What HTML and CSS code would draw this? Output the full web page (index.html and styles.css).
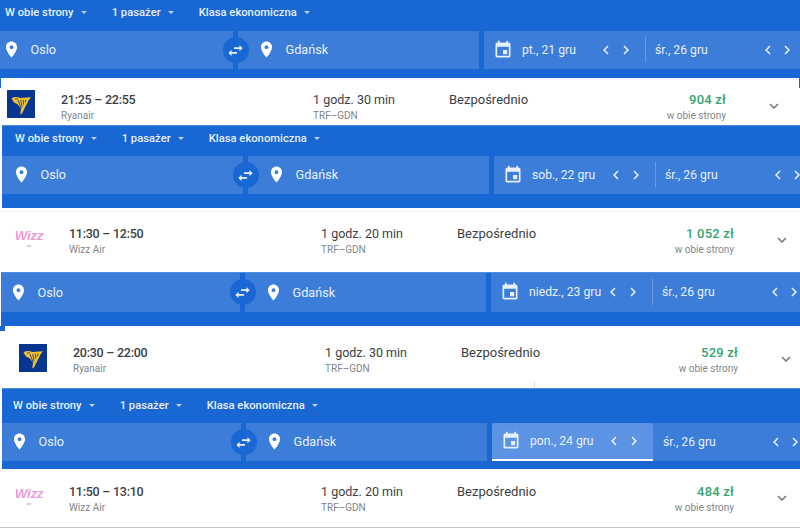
FILE: index.html
```html
<!DOCTYPE html>
<html lang="pl">
<head>
<meta charset="utf-8">
<title>Loty Oslo – Gdańsk</title>
<link rel="stylesheet" href="styles.css">
</head>
<body>
<svg class="defs" width="0" height="0" aria-hidden="true">
  <symbol id="pin" viewBox="0 0 24 24"><path d="M12 2C8.13 2 5 5.13 5 9c0 5.25 7 13 7 13s7-7.75 7-13c0-3.87-3.13-7-7-7zm0 9.5a2.5 2.5 0 0 1 0-5 2.5 2.5 0 0 1 0 5z"/></symbol>
  <symbol id="swap" viewBox="0 0 24 24"><path d="M6.99 11L3 15l3.99 4v-3H14v-2H6.99v-3zM21 9l-3.99-4v3H10v2h7.01v3L21 9z"/></symbol>
  <symbol id="cal" viewBox="0 0 24 24"><path d="M17 12h-5v5h5v-5zM16 1v2H8V1H6v2H5c-1.11 0-1.99.9-1.99 2L3 19c0 1.1.89 2 2 2h14c1.1 0 2-.9 2-2V5c0-1.1-.9-2-2-2h-1V1h-2zm3 18H5V8h14v11z"/></symbol>
  <symbol id="prev" viewBox="0 0 24 24"><path d="M15.41 7.41L14 6l-6 6 6 6 1.41-1.41L10.83 12z"/></symbol>
  <symbol id="next" viewBox="0 0 24 24"><path d="M8.59 16.59L10 18l6-6-6-6-1.41 1.41L13.17 12z"/></symbol>
  <symbol id="more" viewBox="0 0 24 24"><path d="M16.59 8.59L12 13.17 7.41 8.59 6 10l6 6 6-6z"/></symbol>
  <symbol id="harp" viewBox="0 0 28 28"><rect width="28" height="28" fill="#073590"/><path fill="#eec22e" d="M4.5 8.5C7.5 6.500 10.500 6.800 13 8l11-.8-2.500 3.300L15 23.500l-1.800 1 .8-5.500C12.500 15.500 10 13.500 7 12.500z"/><path stroke="#073590" stroke-width=".8" fill="none" d="M11 10.200l3.300 8.300M13.700 10l1.500 7M16.300 9.800l.3 4.800M19 9.600l-1 3M8 9.200c1-.6 2-.6 3 0"/></symbol>
</svg>

<section class="search s1">
  <div class="opts"><span class="opt">W obie strony<i class="caret"></i></span><span class="opt">1 pasażer<i class="caret"></i></span><span class="opt">Klasa ekonomiczna<i class="caret"></i></span></div>
  <div class="fields">
    <div class="field origin"><svg class="pin"><use href="#pin"/></svg>Oslo<span class="swap"><svg><use href="#swap"/></svg></span></div>
    <div class="field dest"><svg class="pin"><use href="#pin"/></svg>Gdańsk</div>
    <div class="dates">
      <div class="date depart"><svg class="cal"><use href="#cal"/></svg><span>pt., 21 gru</span><span class="nav"><svg><use href="#prev"/></svg><svg><use href="#next"/></svg></span></div>
      <div class="date back"><span>śr., 26 gru</span><span class="nav"><svg><use href="#prev"/></svg><svg><use href="#next"/></svg></span></div>
    </div>
  </div>
</section>
<article class="row r1">
  <svg class="logo"><use href="#harp"/></svg>
  <div class="col times"><div class="main">21:25 – 22:55</div><div class="sub">Ryanair</div></div>
  <div class="col dur"><div class="main thin span-dur">1 godz. 30 min</div><div class="sub">TRF–GDN</div></div>
  <div class="col stops"><div class="main thin">Bezpośrednio</div></div>
  <div class="col price"><div class="main green">904 zł</div><div class="sub">w obie strony</div></div>
  <svg class="more"><use href="#more"/></svg>
</article>

<section class="search s2">
  <div class="opts"><span class="opt">W obie strony<i class="caret"></i></span><span class="opt">1 pasażer<i class="caret"></i></span><span class="opt">Klasa ekonomiczna<i class="caret"></i></span></div>
  <div class="fields">
    <div class="field origin"><svg class="pin"><use href="#pin"/></svg>Oslo<span class="swap"><svg><use href="#swap"/></svg></span></div>
    <div class="field dest"><svg class="pin"><use href="#pin"/></svg>Gdańsk</div>
    <div class="dates">
      <div class="date depart"><svg class="cal"><use href="#cal"/></svg><span>sob., 22 gru</span><span class="nav"><svg><use href="#prev"/></svg><svg><use href="#next"/></svg></span></div>
      <div class="date back"><span>śr., 26 gru</span><span class="nav"><svg><use href="#prev"/></svg><svg><use href="#next"/></svg></span></div>
    </div>
  </div>
</section>
<article class="row r2">
  <div class="logo wizz"><b>Wizz</b><small>air</small></div>
  <div class="col times"><div class="main">11:30 – 12:50</div><div class="sub">Wizz Air</div></div>
  <div class="col dur"><div class="main thin span-dur">1 godz. 20 min</div><div class="sub">TRF–GDN</div></div>
  <div class="col stops"><div class="main thin">Bezpośrednio</div></div>
  <div class="col price"><div class="main green">1 052 zł</div><div class="sub">w obie strony</div></div>
  <svg class="more"><use href="#more"/></svg>
</article>

<section class="search s3">
  <div class="fields">
    <div class="field origin"><svg class="pin"><use href="#pin"/></svg>Oslo<span class="swap"><svg><use href="#swap"/></svg></span></div>
    <div class="field dest"><svg class="pin"><use href="#pin"/></svg>Gdańsk</div>
    <div class="dates">
      <div class="date depart"><svg class="cal"><use href="#cal"/></svg><span>niedz., 23 gru</span><span class="nav"><svg><use href="#prev"/></svg><svg><use href="#next"/></svg></span></div>
      <div class="date back"><span>śr., 26 gru</span><span class="nav"><svg><use href="#prev"/></svg><svg><use href="#next"/></svg></span></div>
    </div>
  </div>
</section>
<article class="row r3">
  <svg class="logo"><use href="#harp"/></svg>
  <div class="col times"><div class="main">20:30 – 22:00</div><div class="sub">Ryanair</div></div>
  <div class="col dur"><div class="main thin span-dur">1 godz. 30 min</div><div class="sub">TRF–GDN</div></div>
  <div class="col stops"><div class="main thin">Bezpośrednio</div></div>
  <div class="col price"><div class="main green">529 zł</div><div class="sub">w obie strony</div></div>
  <svg class="more"><use href="#more"/></svg>
</article>

<section class="search s4">
  <div class="opts"><span class="opt">W obie strony<i class="caret"></i></span><span class="opt">1 pasażer<i class="caret"></i></span><span class="opt">Klasa ekonomiczna<i class="caret"></i></span></div>
  <div class="fields">
    <div class="field origin"><svg class="pin"><use href="#pin"/></svg>Oslo<span class="swap"><svg><use href="#swap"/></svg></span></div>
    <div class="field dest"><svg class="pin"><use href="#pin"/></svg>Gdańsk</div>
    <div class="dates">
      <div class="date depart active"><svg class="cal"><use href="#cal"/></svg><span>pon., 24 gru</span><span class="nav"><svg><use href="#prev"/></svg><svg><use href="#next"/></svg></span></div>
      <div class="date back"><span>śr., 26 gru</span><span class="nav"><svg><use href="#prev"/></svg><svg><use href="#next"/></svg></span></div>
    </div>
  </div>
</section>
<article class="row r4">
  <div class="logo wizz"><b>Wizz</b><small>air</small></div>
  <div class="col times"><div class="main">11:50 – 13:10</div><div class="sub">Wizz Air</div></div>
  <div class="col dur"><div class="main thin span-dur">1 godz. 20 min</div><div class="sub">TRF–GDN</div></div>
  <div class="col stops"><div class="main thin">Bezpośrednio</div></div>
  <div class="col price"><div class="main green">484 zł</div><div class="sub">w obie strony</div></div>
  <svg class="more"><use href="#more"/></svg>
</article>
</body>
</html>
```

FILE: styles.css
```css
* { box-sizing: border-box; }
html, body { margin: 0; height: 528px; overflow: hidden; background: #fff; }
body { font-family: Roboto, "Liberation Sans", sans-serif; color: #3c4043; }
.defs { position: absolute; }

.search { background: #1967d2; overflow: hidden; color: #e8f0fe; margin-left: var(--ml); --ml: 0px; --shift: 0px; }
.s1 { height: 78px; }
.s2 { height: 83px; --ml: 2px; --shift: 10px; border-top: 1px solid #4f8ee2; }
.s3 { height: 54px; --ml: 1px; --shift: 7px; border-top: 1px solid #4f8ee2; }
.s4 { height: 81px; --ml: 2px; --shift: 8px; border-top: 1px solid #4f8ee2; }

.opts { display: flex; height: 31px; padding: 4px 0 0 calc(5px + var(--shift) - var(--ml)); }
.s2 .opts { height: 30px; }
.s4 .opts { height: 34px; padding-top: 8px; }
.opt { display: flex; align-items: center; height: 16px; margin-right: 25px; font-size: 11.2px; font-weight: 500; letter-spacing: .03px; white-space: nowrap; }
.caret { width: 0; height: 0; margin-left: 7px; border: 3px solid transparent; border-top-color: #b9d0f2; border-bottom-width: 0; }

.fields { display: flex; gap: 5px; height: 38px; width: 830px; font-size: 12.7px; }
.s3 .fields { height: 39px; }
.field, .dates { display: flex; align-items: center; background: #3c7dd9; flex: none; position: relative; }
.field { padding-bottom: 1px; }
.origin { width: calc(233px + var(--shift) - var(--ml)); padding-left: calc(2px + var(--shift) - var(--ml)); }
.dest { width: 241px; padding-left: 19px; }
.pin { width: 19px; height: 19px; margin-right: 9.5px; fill: #fff; flex: none; }
.swap { position: absolute; right: -15.5px; top: 6px; width: 26px; height: 26px; border-radius: 50%; background: #1967d2; display: flex; align-items: center; justify-content: center; z-index: 1; }
.swap svg { width: 19px; height: 19px; fill: #e8f0fe; }

.dates { width: 316px; font-size: 12.2px; }
.date { display: flex; align-items: center; height: 100%; white-space: nowrap; padding-bottom: 1px; }
.depart { width: 161px; padding: 0 10px 1px 9px; position: relative; }
.depart::after { content: ""; position: absolute; right: -1px; top: 6px; bottom: 7px; width: 1px; background: #6a9be3; }
.back { width: 155px; padding: 0 4px 1px 10px; }
.cal { width: 20px; height: 20px; margin-right: 9px; fill: #e8f0fe; flex: none; }
.nav { display: flex; gap: 2px; margin-left: auto; }
.nav svg { width: 18px; height: 18px; fill: #e8f0fe; flex: none; display: block; }
.back .nav { gap: 1px; }
.active { background: #5c93e3; border-radius: 4px 4px 0 0; border-bottom: 2px solid #fff; padding-bottom: 0; }
.active::after { display: none; }

.row { --r: 0px; --t: 1px; position: relative; display: flex; align-items: flex-start; background: #fff; padding-left: calc(7px + var(--r)); }
.r1 { height: 47px; padding-top: 12px; }
.r2 { height: 64px; padding-top: 16px; --r: 8px; }
.r3 { height: 62px; padding-top: 18px; --r: 12px; --t: 0px; }
.r4 { height: 59px; padding-top: 13px; --r: 8px; border-bottom: 1px solid #c6c6c6; }
.r1::before, .r1::after { content: ""; position: absolute; top: 0; height: 10px; width: 1px; background: #1967d2; }
.r1::before { left: 0; }
.r1::after { right: 0; }
.r2::before { content: ""; position: absolute; left: 0; right: 0; top: 3px; height: 1px; background: #edf0f2; }
.r3::before { content: ""; position: absolute; left: 0; top: 0; width: 5px; height: 5px; background: #1967d2; }
.r3::after { content: ""; position: absolute; left: 534px; bottom: 0; width: 1px; height: 7px; background: #dadce0; }

.logo { width: 28px; height: 28px; flex: none; margin-right: 26px; }
.wizz { display: flex; flex-direction: column; align-items: center; padding-top: 4px; color: #ee9ad8; filter: blur(.4px); line-height: 1; }
.wizz b { font: italic 700 13.5px/15px "Liberation Sans", sans-serif; letter-spacing: -.4px; }
.wizz small { font-size: 4px; line-height: 5px; color: #b98ad0; }
.col { flex: none; margin-top: var(--t); }
.main { height: 18px; font-size: 12.5px; line-height: 18px; font-weight: 500; white-space: nowrap; letter-spacing: -.25px; }
.main.thin { font-weight: 400; font-size: 13px; letter-spacing: 0; }
.main.span-dur { font-size: 12.5px; }
.sub { height: 14px; font-size: 10px; line-height: 14px; color: #80868b; white-space: nowrap; }
.times { width: 252px; }
.dur { width: 136px; }
.stops { width: 167px; }
.price { width: 110px; text-align: right; }
.main.green { color: #34a56f; font-weight: 500; font-size: 13px; letter-spacing: .2px; }
.more { width: 18px; height: 18px; margin: calc(6px + var(--t)) 0 0 39px; fill: #70757a; flex: none; }
```
